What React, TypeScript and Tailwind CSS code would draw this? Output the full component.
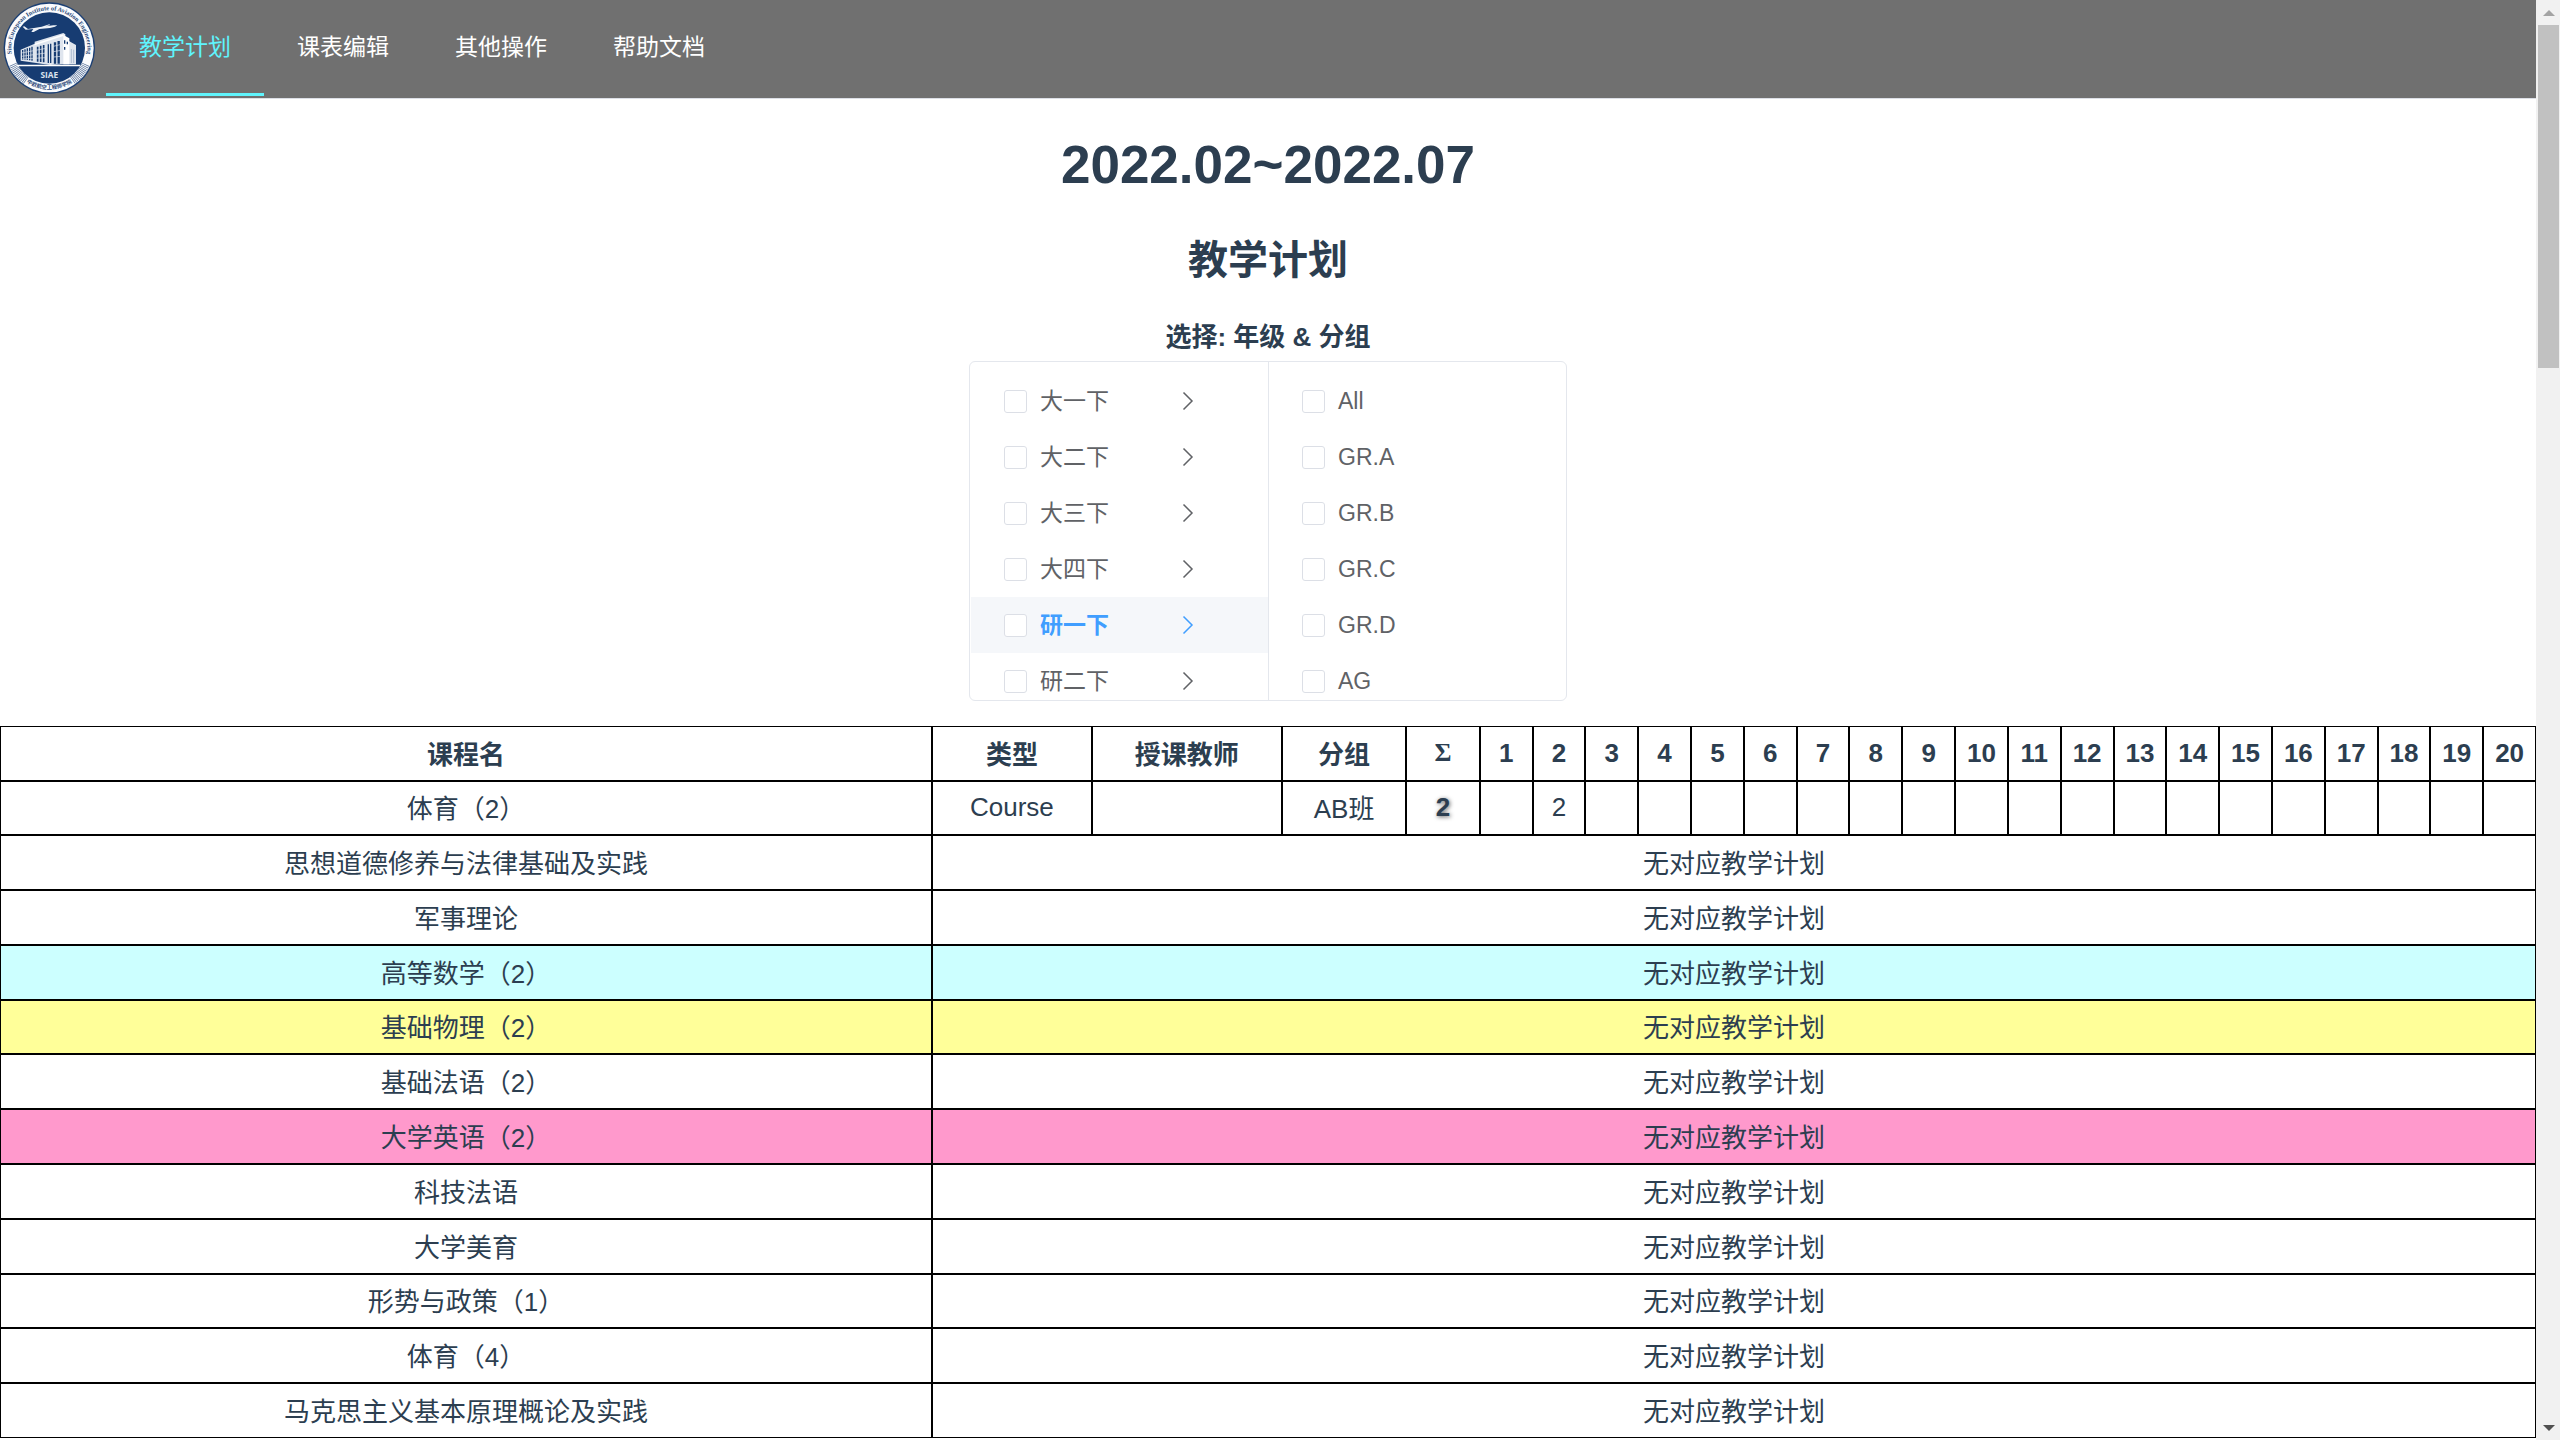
import React from "react";

const NAV = ["教学计划", "课表编辑", "其他操作", "帮助文档"];
const GRADES = ["大一下", "大二下", "大三下", "大四下", "研一下", "研二下"];
const GROUPS = ["All", "GR.A", "GR.B", "GR.C", "GR.D", "AG"];
const WEEKS = Array.from({ length: 20 }, (_, i) => i + 1);

const COURSES = [
  { name: "思想道德修养与法律基础及实践", row: "h-[55px]" },
  { name: "军事理论", row: "h-[55px]" },
  { name: "高等数学（2）", row: "h-[55px] bg-[#ccffff]" },
  { name: "基础物理（2）", row: "h-[54px] bg-[#ffff99]" },
  { name: "基础法语（2）", row: "h-[55px]" },
  { name: "大学英语（2）", row: "h-[55px] bg-[#ff99cc]" },
  { name: "科技法语", row: "h-[55px]" },
  { name: "大学美育", row: "h-[55px]" },
  { name: "形势与政策（1）", row: "h-[54px]" },
  { name: "体育（4）", row: "h-[55px]" },
  { name: "马克思主义基本原理概论及实践", row: "h-[55px]" },
];

function Logo() {
  return (
    <svg viewBox="9 4 279 282" className="h-[94px] w-[93px]" role="img" aria-label="SIAE">
      <defs>
        <path id="ringTop" d="M 41 185 A 114 114 0 1 1 255 185" />
        <path id="ringBottom" d="M 72 243 A 124 124 0 0 0 224 243" />
      </defs>
      <circle cx="148" cy="145" r="137" fill="#1b3f74" />
      <circle cx="148" cy="145" r="133" fill="#fbfcfe" />
      <path d="M 40 194 A 119 119 0 0 0 80 243" fill="none" stroke="#1b3f74" strokeWidth="26" strokeDasharray="2 3" opacity="0.75" />
      <path d="M 256 194 A 119 119 0 0 1 216 243" fill="none" stroke="#1b3f74" strokeWidth="26" strokeDasharray="2 3" opacity="0.75" />
      <circle cx="148" cy="145" r="107" fill="#173c72" />
      <text fill="#2b4a7a" fontSize="19" fontWeight="700" fontFamily="'Liberation Serif', serif">
        <textPath href="#ringTop" startOffset="50%" textAnchor="middle">
          Sino-European Institute of Aviation Engineering
        </textPath>
      </text>
      <text fill="#2b4a7a" fontSize="16" fontWeight="700" fontFamily="'Noto Sans CJK SC', sans-serif">
        <textPath href="#ringBottom" startOffset="50%" textAnchor="middle">
          中欧航空工程师学院
        </textPath>
      </text>
      {/* aircraft */}
      <path d="M 68 81 L 77 90 L 100 88 L 94 97 L 101 97 L 118 88 L 150 85 L 165 81 L 172 77 L 160 77 L 138 80 L 150 76 L 148 74 L 125 81 L 84 88 L 73 80 Z" fill="#eef2f8" />
      {/* building */}
      <path d="M 62 150 L 104 132 L 104 126 L 190 100 L 196 104 L 196 118 L 228 136 L 228 194 L 184 194 L 150 196 L 62 183 Z" fill="#dfe5ee" />
      <path d="M 190 106 L 208 116 L 208 194 L 190 194 Z" fill="#ffffff" />
      <path d="M 104 132 L 190 104 L 190 109 L 104 137 Z" fill="#ffffff" />
      <g stroke="#173c72" strokeWidth="4" fill="none">
        <path d="M 68 151 V 180 M 75 149 V 180 M 82 146 V 181 M 89 144 V 182 M 96 141 V 183" />
        <path d="M 113 141 V 186 M 122 138 V 187 M 131 136 V 188" strokeWidth="5" />
        <path d="M 145 134 V 190 M 152 132 V 190" />
        <path d="M 165 128 V 192 M 176 124 V 192" strokeWidth="7" />
      </g>
      <g stroke="#dfe5ee" strokeWidth="2" fill="none">
        <path d="M 64 160 L 138 146 M 64 170 L 138 160 M 64 178 L 138 174" />
        <path d="M 160 140 L 184 134 M 160 156 L 184 152 M 160 172 L 184 170" />
      </g>
      <path d="M 194 122 V 132 M 202 126 V 134 M 194 142 V 150" stroke="#173c72" strokeWidth="4" />
      <path d="M 214 148 V 190 M 221 150 V 190" stroke="#aebcd0" strokeWidth="3" />
      <path d="M 50 195 H 240 V 200 H 50 Z" fill="#ffffff" />
      <text x="148" y="236" textAnchor="middle" fill="#dbe3ee" fontSize="25" fontWeight="700" fontFamily="'Open Sans', sans-serif">
        SIAE
      </text>
    </svg>
  );
}

function Chevron() {
  return (
    <svg viewBox="0 0 12 20" className="h-5 w-3" fill="none" stroke="currentColor" strokeWidth="1.5" aria-hidden="true">
      <path d="M1.5 1.5 L10 10 L1.5 18.5" />
    </svg>
  );
}

function Option({ label, active, arrow }: { label: string; active?: boolean; arrow?: boolean }) {
  return (
    <li className={active ? "bg-[#f5f7fa] font-bold text-[#409eff]" : ""}>
      <label className="flex h-14 items-center pl-[33px] pr-[74px]">
        <input
          type="checkbox"
          className="h-[23px] w-[23px] appearance-none rounded-[3px] border border-[#dcdfe6] bg-white checked:bg-[#409eff]"
        />
        <span className="ml-[13px] flex-1">{label}</span>
        {arrow && <Chevron />}
      </label>
    </li>
  );
}

function ScrollTrack() {
  return (
    <div className="flex h-full w-6 flex-none flex-col items-center bg-[#f1f1f1] pl-px" aria-hidden="true">
      <div className="flex h-[25px] flex-none items-center justify-center">
        <svg viewBox="0 0 12 6" className="h-1.5 w-3"><path d="M0 6 L6 0 L12 6 Z" fill="#a3a3a3" /></svg>
      </div>
      <div className="h-[343px] w-[21px] bg-[#c1c1c1]" />
      <div className="mt-auto flex h-[25px] flex-none items-center justify-center">
        <svg viewBox="0 0 12 6" className="h-1.5 w-3"><path d="M0 0 L6 6 L12 0 Z" fill="#505050" /></svg>
      </div>
    </div>
  );
}

const CELL = "border border-black px-0 pb-0 pt-0.5 text-center";
const LATIN_CELL = "border border-black px-0 pb-0.5 pt-0 text-center";

export default function App() {
  return (
    <div className="flex h-screen overflow-hidden bg-white font-['Liberation_Sans','Noto_Sans_CJK_SC',sans-serif] text-[#2c3e50]">
      <div className="min-w-0 flex-1 overflow-hidden">
        <header className="flex h-[99px] border-b border-[#dcdfe6] bg-[#707070]">
          <div className="flex w-[106px] flex-none items-start pl-[3px] pt-px">
            <Logo />
          </div>
          <nav className="flex h-[96px] text-[23px]">
            {NAV.map((item, i) => (
              <a
                key={item}
                href="#"
                className={
                  i === 0
                    ? "flex items-center border-b-[3px] border-[#5ff4fd] px-[33px] pt-0.5 text-[#5ff4fd]"
                    : "flex items-center border-b-[3px] border-transparent px-[33px] pt-0.5 text-white"
                }
              >
                {item}
              </a>
            ))}
          </nav>
        </header>

        <main>
          <div className="flex flex-col items-center font-bold">
            <h1 className="mt-[36px] text-[53px] leading-[60px]">2022.02~2022.07</h1>
            <h2 className="mt-[38px] text-[40px] leading-[54px]">教学计划</h2>
            <h4 className="mt-[32px] text-[26px] leading-[36px]">选择: 年级 &amp; 分组</h4>
          </div>

          <div className="mx-auto mt-[6px] flex h-[340px] w-[598px] overflow-hidden rounded-[6px] border border-[#e4e7ed] text-[23px] text-[#606266]">
            <ul className="flex-1 border-r border-[#e4e7ed] pl-px pt-[11px]">
              {GRADES.map((g) => (
                <Option key={g} label={g} active={g === "研一下"} arrow />
              ))}
            </ul>
            <ul className="flex-1 pt-[11px]">
              {GROUPS.map((g) => (
                <Option key={g} label={g} />
              ))}
            </ul>
          </div>

          <table className="mt-[25px] w-full table-fixed border-separate border-spacing-0 text-[26px] leading-[36px]">
            <colgroup>
              <col />
              <col className="w-[6.3%]" />
              <col className="w-[7.5%]" />
              <col className="w-[4.9%]" />
              <col className="w-[2.9%]" />
              {WEEKS.map((w) => (
                <col key={w} className="w-[2.083%]" />
              ))}
            </colgroup>
            <thead>
              <tr className="h-[55px]">
                <th className={CELL}>课程名</th>
                <th className={CELL}>类型</th>
                <th className={CELL}>授课教师</th>
                <th className={CELL}>分组</th>
                <th className={LATIN_CELL}>
                  <span className="font-['Liberation_Serif',serif]">Σ</span>
                </th>
                {WEEKS.map((w) => (
                  <th key={w} className={LATIN_CELL}>{w}</th>
                ))}
              </tr>
            </thead>
            <tbody>
              <tr className="h-[54px]">
                <td className={CELL}>体育（2）</td>
                <td className={LATIN_CELL}>Course</td>
                <td className={CELL} />
                <td className={CELL}>AB班</td>
                <td className={LATIN_CELL}>
                  <span className="font-bold [text-shadow:1px_1px_4px_#666]">2</span>
                </td>
                {WEEKS.map((w) => (
                  <td key={w} className={LATIN_CELL}>{w === 2 ? "2" : ""}</td>
                ))}
              </tr>
              {COURSES.map((c) => (
                <tr key={c.name} className={c.row}>
                  <td className={CELL}>{c.name}</td>
                  <td className={CELL} colSpan={24}>无对应教学计划</td>
                </tr>
              ))}
            </tbody>
          </table>
        </main>
      </div>
      <ScrollTrack />
    </div>
  );
}
